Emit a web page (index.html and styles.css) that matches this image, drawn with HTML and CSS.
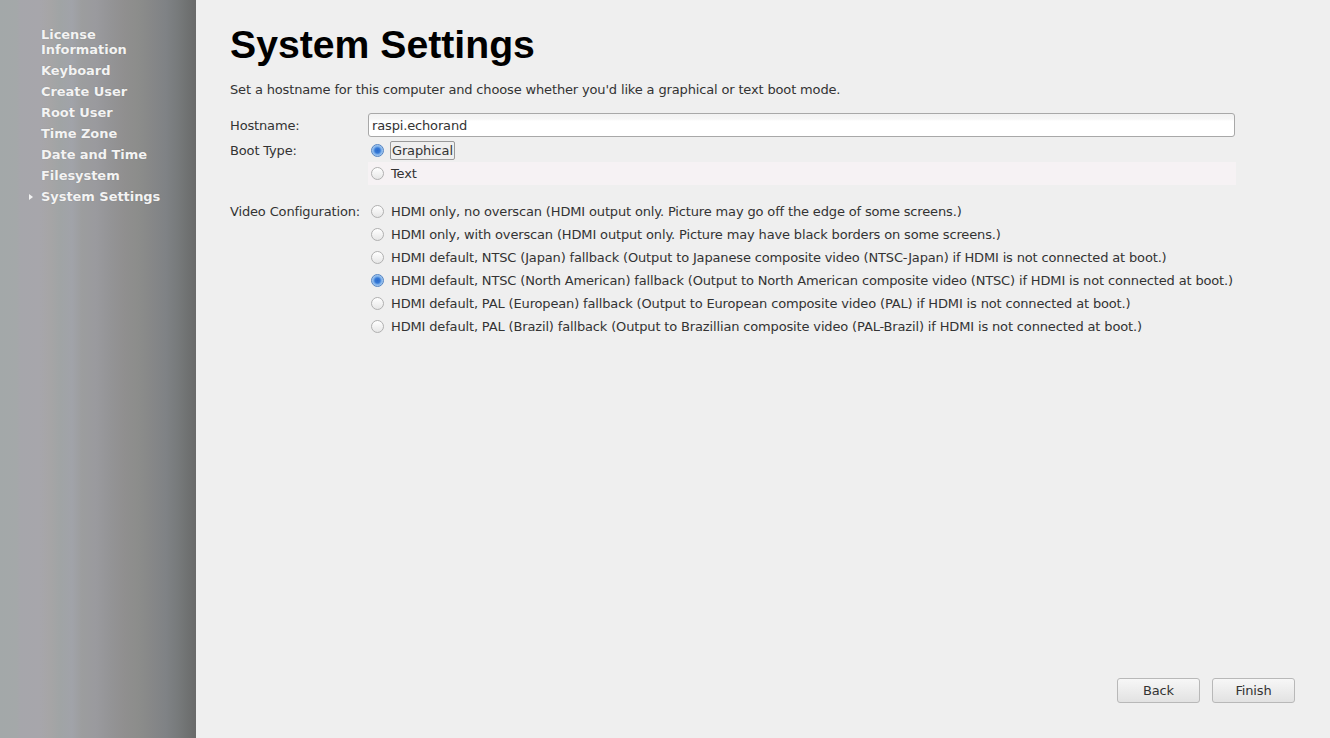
FILE: index.html
```html
<!DOCTYPE html>
<html lang="en">
<head>
<meta charset="utf-8">
<title>System Settings</title>
<link rel="stylesheet" href="styles.css">
</head>
<body>
<div class="app">
  <nav class="sidebar">
    <ul class="steps">
      <li>License<br>Information</li>
      <li>Keyboard</li>
      <li>Create User</li>
      <li>Root User</li>
      <li>Time Zone</li>
      <li>Date and Time</li>
      <li>Filesystem</li>
      <li class="current">System Settings</li>
    </ul>
  </nav>
  <main class="main">
    <h1 class="title">System Settings</h1>
    <p class="desc">Set a hostname for this computer and choose whether you'd like a graphical or text boot mode.</p>
    <div class="form">
      <div class="label label-host">Hostname:</div>
      <div class="field"><div class="input">raspi.echorand</div></div>

      <div class="label label-boot">Boot Type:</div>
      <div class="group group-boot">
        <div class="opt"><span class="radio checked"></span><span class="focus">Graphical</span></div>
        <div class="opt hl"><span class="radio"></span><span class="txt">Text</span></div>
      </div>

      <div class="label label-video">Video Configuration:</div>
      <div class="group group-video">
        <div class="opt"><span class="radio"></span><span class="txt">HDMI only, no overscan (HDMI output only. Picture may go off the edge of some screens.)</span></div>
        <div class="opt"><span class="radio"></span><span class="txt">HDMI only, with overscan (HDMI output only. Picture may have black borders on some screens.)</span></div>
        <div class="opt"><span class="radio"></span><span class="txt">HDMI default, NTSC (Japan) fallback (Output to Japanese composite video (NTSC-Japan) if HDMI is not connected at boot.)</span></div>
        <div class="opt"><span class="radio checked"></span><span class="txt">HDMI default, NTSC (North American) fallback (Output to North American composite video (NTSC) if HDMI is not connected at boot.)</span></div>
        <div class="opt"><span class="radio"></span><span class="txt">HDMI default, PAL (European) fallback (Output to European composite video (PAL) if HDMI is not connected at boot.)</span></div>
        <div class="opt"><span class="radio"></span><span class="txt">HDMI default, PAL (Brazil) fallback (Output to Brazillian composite video (PAL-Brazil) if HDMI is not connected at boot.)</span></div>
      </div>
    </div>
    <div class="buttons">
      <button class="btn">Back</button>
      <button class="btn">Finish</button>
    </div>
  </main>
</div>
</body>
</html>
```

FILE: styles.css
```css
* { box-sizing: border-box; }
html, body { margin: 0; padding: 0; }
body {
  width: 1330px;
  height: 738px;
  overflow: hidden;
  background: #efefef;
  font-family: "DejaVu Sans", sans-serif;
  font-size: 13px;
  letter-spacing: -0.15px;
  color: #333;
}
.app {
  display: flex;
  height: 738px;
}
.sidebar {
  width: 196px;
  flex: none;
  background: linear-gradient(to right,
    #a3a8a9 0px, #a4a8a9 17px, #a6a6ab 20px, #a7a6ab 40px,
    #a6a5a6 50px, #a0a4a5 60px, #a1a3a9 72px, #9c9d9e 82px,
    #9a9a9e 96px, #949496 110px, #908f8f 124px, #8c8d8b 138px,
    #868788 152px, #7f8285 166px, #777a7b 178px, #6f7171 188px,
    #6a6a6a 196px);
  padding-top: 27px;
}
.steps {
  list-style: none;
  margin: 0;
  padding: 0 0 0 41px;
  display: flex;
  flex-direction: column;
  gap: 6px;
}
.steps li {
  position: relative;
  font-weight: bold;
  font-size: 13px;
  line-height: 15px;
  color: #f3f3f3;
  letter-spacing: -0.05px;
  text-shadow: 0 0 1px rgba(80,80,80,0.4);
}
.steps li.current::before {
  content: "";
  position: absolute;
  left: -12px;
  top: 5px;
  border-left: 4px solid #f3f3f3;
  border-top: 3px solid transparent;
  border-bottom: 3px solid transparent;
}
.main {
  flex: 1;
  display: flex;
  flex-direction: column;
  padding: 23px 35px 35px 34px;
}
.title {
  margin: 0;
  font-family: "Liberation Sans", Arial, sans-serif;
  font-weight: bold;
  font-size: 39.2px;
  letter-spacing: 0;
  line-height: 44px;
  color: #000;
}
.desc {
  margin: 15px 0 0;
  line-height: 15px;
  color: #333;
}
.form {
  margin-top: 16px;
  display: grid;
  grid-template-columns: 138px 868px;
  align-items: start;
}
.label {
  line-height: 15px;
  color: #333;
  padding-top: 4px;
  white-space: nowrap;
}
.label-host { padding-top: 5px; }
.label-boot { margin-top: 2px; padding-top: 4px; }
.label-video { margin-top: 15px; }
.input {
  height: 24px;
  border: 1px solid #a8a8a8;
  border-radius: 3px;
  background: linear-gradient(to bottom, #f2f2f2 0, #f6f6f6 5px, #ffffff 7px, #ffffff 100%);
  padding: 4px 0 0 3px;
  line-height: 15px;
  color: #333;
  width: 867px;
}
.group {
  display: flex;
  flex-direction: column;
}
.group-boot { margin-top: 2px; }
.group-video { margin-top: 15px; }
.opt {
  height: 23px;
  display: flex;
  align-items: center;
  padding-left: 3px;
  white-space: nowrap;
}
.opt.hl { background: #f6f2f4; }
.radio {
  width: 13px;
  height: 13px;
  flex: none;
  border-radius: 50%;
  border: 1px solid #b0b0b0;
  background: linear-gradient(to bottom, #ffffff, #e6e6e6);
  margin-right: 7px;
}
.radio.checked {
  border-color: #5384c2;
  background: radial-gradient(circle at 50% 50%, #2a6ccc 0, #3578d6 2.5px, #7aaee9 4px, #b9d4f3 6px);
}
.txt {
  line-height: 15px;
  color: #333;
}
.focus {
  line-height: 15px;
  color: #333;
  border: 1px solid #999;
  border-radius: 2px;
  padding: 1px;
  margin-left: -1px;
}
.buttons {
  margin-top: auto;
  display: flex;
  justify-content: flex-end;
  gap: 12px;
}
.btn {
  width: 83px;
  height: 25px;
  border: 1px solid #b8b8b8;
  border-radius: 3px;
  background: linear-gradient(to bottom, #f7f7f7, #e2e2e2);
  font-family: "DejaVu Sans", sans-serif;
  font-size: 13px;
  letter-spacing: -0.15px;
  color: #333;
  padding: 0;
}
```
